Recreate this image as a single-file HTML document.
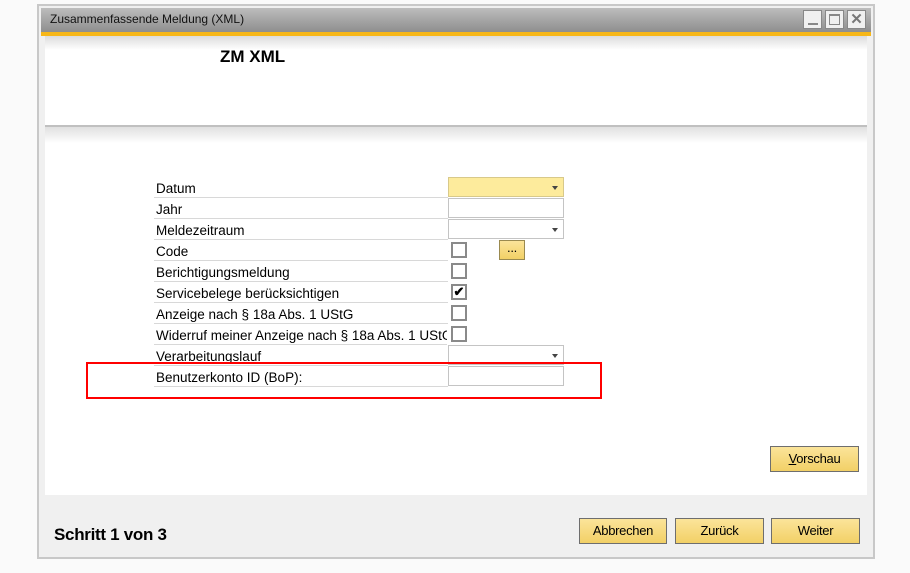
<!DOCTYPE html><html><head><style>
*{margin:0;padding:0;box-sizing:border-box}
body{width:910px;height:573px;background:#fafafa;position:relative;overflow:hidden;font-family:"Liberation Sans",sans-serif;font-size:13px;color:#000}
.a{position:absolute}
.row{position:absolute;left:154px;width:294px;height:21px;border-bottom:1px solid #d8d8d8;padding-left:2px;line-height:23px;white-space:nowrap;overflow:hidden;font-size:13.5px}
.inp{position:absolute;left:448px;width:116px;height:20px;border:1px solid #c4c4c4;background:#fff}
.dd::after{content:"";position:absolute;right:5px;top:8px;border:3px solid transparent;border-top:4px solid #444}
.cb{position:absolute;left:451px;width:16px;height:16px;border:2px solid #8a8a8a;background:#fff}
.btn{position:absolute;height:26px;border:1px solid #6e6e6e;background:linear-gradient(#fbe49a,#f2d066);text-align:center;line-height:24px;font-size:13px;letter-spacing:-0.3px}
.wb{position:absolute;top:10px;width:19px;height:19px;border:1px solid #888;background:#f0f0f0}
</style></head><body>
<div class="a" style="left:37px;top:4px;width:838px;height:555px;border:2px solid #c8c8c8;background:#f0f0f0"></div>
<div class="a" style="left:41px;top:8px;width:830px;height:24px;background:linear-gradient(#bdbdbd,#8e8e8e)"></div>
<div class="a" style="left:50px;top:12px;font-size:12px;color:#111">Zusammenfassende Meldung (XML)</div>
<div class="wb" style="left:803px"><div class="a" style="left:4px;top:12px;width:10px;height:2px;background:#888"></div></div>
<div class="wb" style="left:825px"><div class="a" style="left:3px;top:3px;width:11px;height:11px;border:1px solid #888;border-top:2px solid #888"></div></div>
<div class="wb" style="left:847px;color:#777;font-weight:bold;font-size:15px;text-align:center;line-height:17px">✕</div>
<div class="a" style="left:41px;top:32px;width:830px;height:4px;background:#f7b718"></div>
<div class="a" style="left:45px;top:36px;width:822px;height:459px;background:#fff"></div>
<div class="a" style="left:45px;top:36px;width:822px;height:14px;background:linear-gradient(#dcdcdc,#fff)"></div>
<div class="a" style="left:45px;top:125px;width:822px;height:2px;background:#c0c0c0"></div>
<div class="a" style="left:45px;top:127px;width:822px;height:16px;background:linear-gradient(#e0e0e0,#fff)"></div>
<div class="a" style="left:220px;top:47px;font-weight:bold;font-size:17px">ZM XML</div>
<div class="row" style="top:177px">Datum</div>
<div class="row" style="top:198px">Jahr</div>
<div class="row" style="top:219px">Meldezeitraum</div>
<div class="row" style="top:240px">Code</div>
<div class="row" style="top:261px">Berichtigungsmeldung</div>
<div class="row" style="top:282px">Servicebelege berücksichtigen</div>
<div class="row" style="top:303px">Anzeige nach § 18a Abs. 1 UStG</div>
<div class="row" style="top:324px;width:293px">Widerruf meiner Anzeige nach § 18a Abs. 1 UStG</div>
<div class="row" style="top:345px">Verarbeitungslauf</div>
<div class="row" style="top:366px">Benutzerkonto ID (BoP):</div>
<div class="inp dd" style="top:177px;background:#fdeb9c;border-color:#d8c98a"></div>
<div class="inp" style="top:198px"></div>
<div class="inp dd" style="top:219px"></div>
<div class="cb" style="top:242px"></div>
<div class="btn" style="left:499px;top:240px;width:26px;height:20px;line-height:14px;border-color:#9a8a50">...</div>
<div class="cb" style="top:263px"></div>
<div class="cb" style="top:284px;font-size:13px;line-height:12px;text-align:center;font-weight:bold">✔</div>
<div class="cb" style="top:305px"></div>
<div class="cb" style="top:326px"></div>
<div class="inp dd" style="top:345px"></div>
<div class="inp" style="top:366px"></div>
<div class="a" style="left:86px;top:362px;width:516px;height:37px;border:2px solid #f00"></div>
<div class="btn" style="left:770px;top:446px;width:89px"><u>V</u>orschau</div>
<div class="a" style="left:54px;top:525px;font-weight:bold;font-size:17px;letter-spacing:-0.3px">Schritt 1 von 3</div>
<div class="btn" style="left:579px;top:518px;width:88px">Abbrechen</div>
<div class="btn" style="left:675px;top:518px;width:89px">Zurück</div>
<div class="btn" style="left:771px;top:518px;width:89px">Weiter</div>
</body></html>
